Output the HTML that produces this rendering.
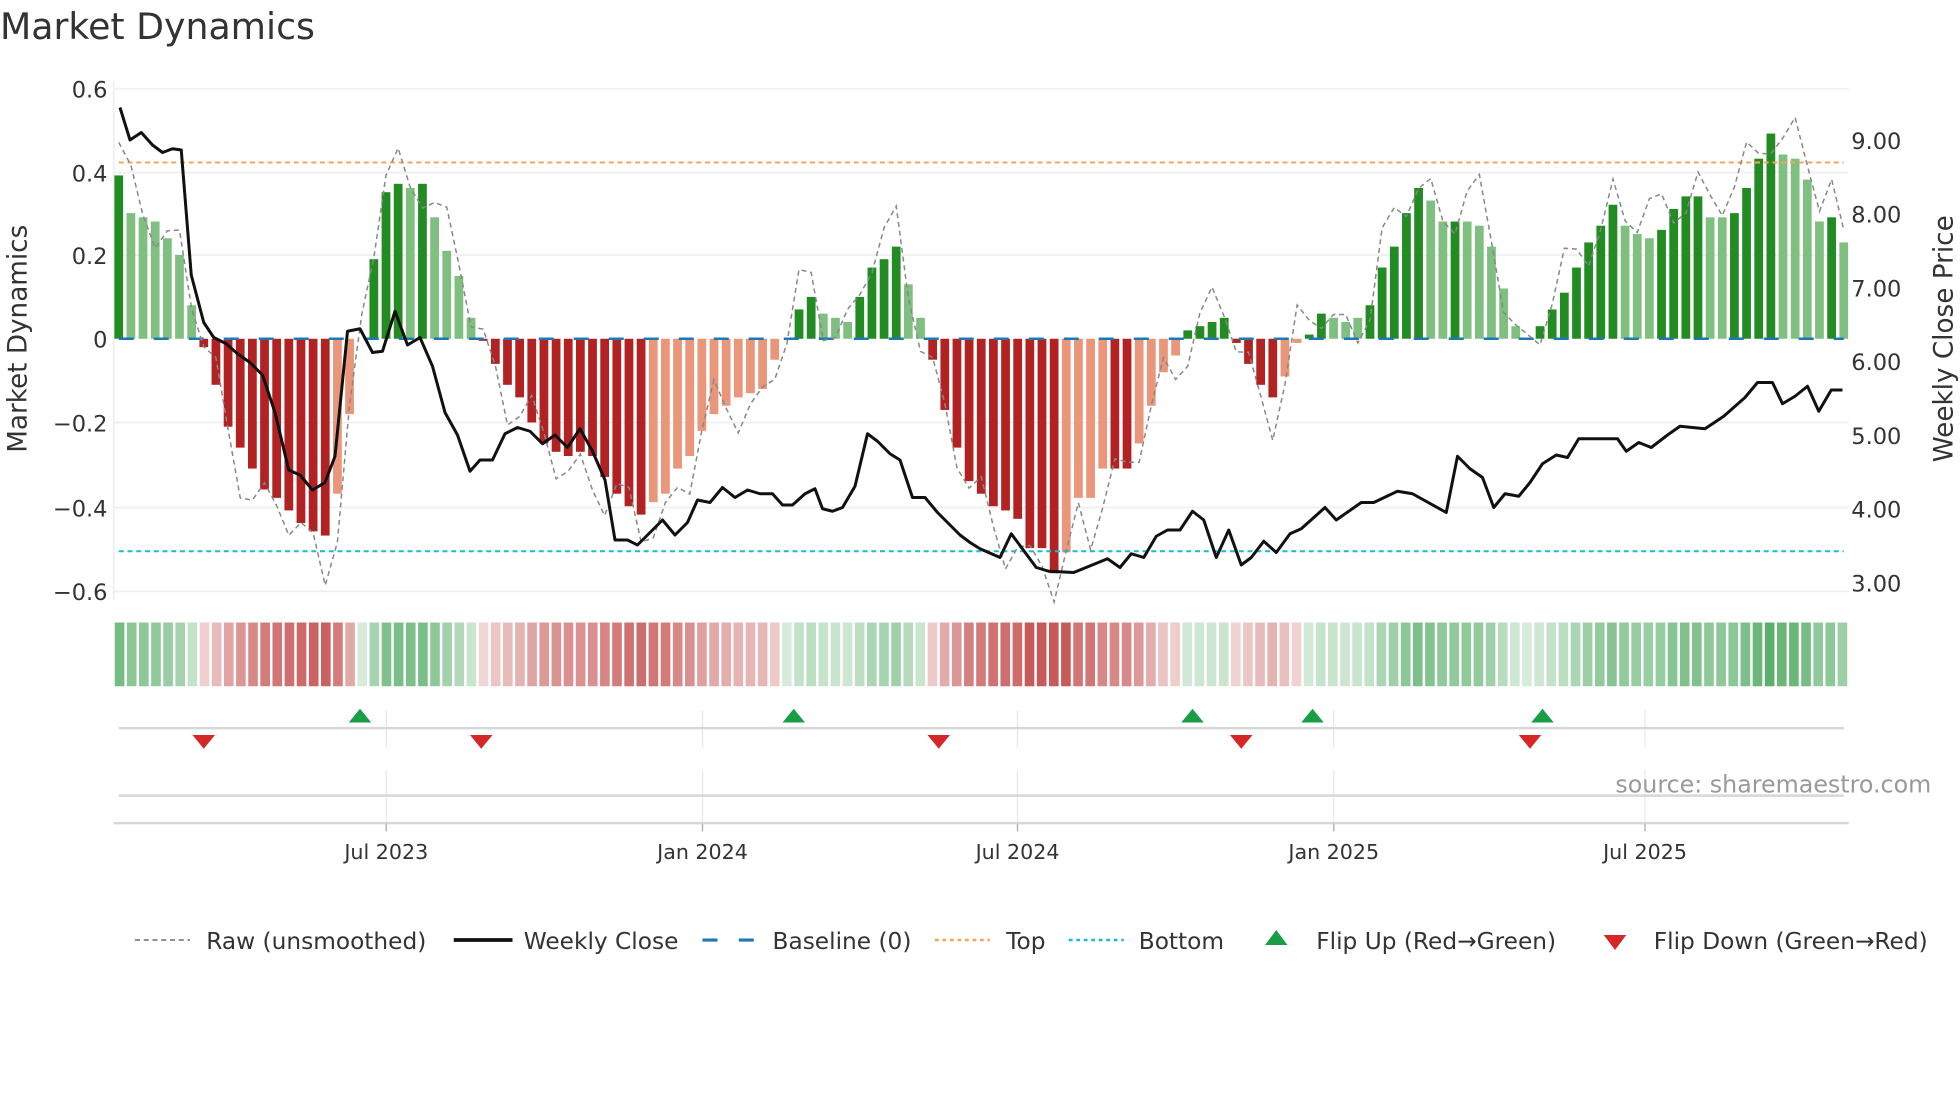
<!DOCTYPE html>
<html><head><meta charset="utf-8"><style>
html,body{margin:0;padding:0;background:#fff;width:1960px;height:1102px;overflow:hidden}
svg{display:block;font-family:"DejaVu Sans","Liberation Sans",sans-serif}
</style></head><body>
<svg id="s" width="1960" height="1102" viewBox="0 0 1568 881.6" xmlns="http://www.w3.org/2000/svg">
<text x="0" y="31" font-size="29" fill="#333">Market Dynamics</text>
<g id="grid" stroke="#eef0f3" stroke-width="1.5">
<line x1="91" x2="1479" y1="71" y2="71"/><line x1="91" x2="1479" y1="138" y2="138"/><line x1="91" x2="1479" y1="204" y2="204"/><line x1="91" x2="1479" y1="338" y2="338"/><line x1="91" x2="1479" y1="406" y2="406"/><line x1="91" x2="1479" y1="473" y2="473"/>
<line x1="91" x2="91" y1="65" y2="480"/>
</g>
<g font-size="18" fill="#333" text-anchor="end">
<text x="86" y="78">0.6</text><text x="86" y="145">0.4</text><text x="86" y="211">0.2</text><text x="86" y="278">0</text><text x="86" y="345">−0.2</text><text x="86" y="413">−0.4</text><text x="86" y="480">−0.6</text>
</g>
<g font-size="18" fill="#333">
<text x="1481" y="119">9.00</text><text x="1481" y="178">8.00</text><text x="1481" y="237">7.00</text><text x="1481" y="296">6.00</text><text x="1481" y="355">5.00</text><text x="1481" y="414">4.00</text><text x="1481" y="473">3.00</text>
</g>
<text transform="translate(21,271) rotate(-90)" font-size="21" fill="#333" text-anchor="middle">Market Dynamics</text>
<text transform="translate(1562,271) rotate(-90)" font-size="21" fill="#333" text-anchor="middle">Weekly Close Price</text>
<g id="bars"></g>
<line x1="95" x2="1475" y1="130" y2="130" stroke="#f4a460" stroke-width="1.6" stroke-dasharray="4,3"/>
<line x1="95" x2="1475" y1="441" y2="441" stroke="#17becf" stroke-width="1.6" stroke-dasharray="4,3"/>
<line x1="95" x2="1475" y1="271" y2="271" stroke="#1f77b4" stroke-width="2" stroke-dasharray="12,16"/>
<path id="raw" fill="none" stroke="#888" stroke-width="1.2" stroke-dasharray="4,3"/>
<path id="close" fill="none" stroke="#111" stroke-width="2.4" stroke-linejoin="round"/>
<g id="heat"></g>
<g stroke="#e6e8eb" stroke-width="1">
<line x1="309" x2="309" y1="568" y2="598"/><line x1="562" x2="562" y1="568" y2="598"/><line x1="814" x2="814" y1="568" y2="598"/><line x1="1067" x2="1067" y1="568" y2="598"/><line x1="1316" x2="1316" y1="568" y2="598"/>
<line x1="309" x2="309" y1="616" y2="658"/><line x1="562" x2="562" y1="616" y2="658"/><line x1="814" x2="814" y1="616" y2="658"/><line x1="1067" x2="1067" y1="616" y2="658"/><line x1="1316" x2="1316" y1="616" y2="658"/>
</g>
<line x1="95" x2="1475" y1="582.5" y2="582.5" stroke="#d5d7d9" stroke-width="2"/>
<line x1="95" x2="1475" y1="636.5" y2="636.5" stroke="#d5d7d9" stroke-width="2"/>
<line x1="91" x2="1479" y1="658.5" y2="658.5" stroke="#d5d7d9" stroke-width="2"/>
<g stroke="#aaa" stroke-width="1"><line x1="309" x2="309" y1="659" y2="665"/><line x1="562" x2="562" y1="659" y2="665"/><line x1="814" x2="814" y1="659" y2="665"/><line x1="1067" x2="1067" y1="659" y2="665"/><line x1="1316" x2="1316" y1="659" y2="665"/></g>
<g fill="#1a9e45">
<path d="M288 567l-9 11h18z"/><path d="M635 567l-9 11h18z"/><path d="M954 567l-9 11h18z"/><path d="M1050 567l-9 11h18z"/><path d="M1234 567l-9 11h18z"/>
</g>
<g fill="#d62728">
<path d="M163 599l-9 -11h18z"/><path d="M385 599l-9 -11h18z"/><path d="M751 599l-9 -11h18z"/><path d="M993 599l-9 -11h18z"/><path d="M1224 599l-9 -11h18z"/>
</g>
<g font-size="16.5" fill="#333" text-anchor="middle">
<text x="309" y="687">Jul 2023</text><text x="562" y="687">Jan 2024</text><text x="814" y="687">Jul 2024</text><text x="1067" y="687">Jan 2025</text><text x="1316" y="687">Jul 2025</text>
</g>
<text x="1545" y="634" font-size="19" fill="#999" text-anchor="end">source: sharemaestro.com</text>
<g font-size="18.6" fill="#333">
<line x1="108" x2="152" y1="752" y2="752" stroke="#888" stroke-width="1.5" stroke-dasharray="4,3"/><text x="165" y="759">Raw (unsmoothed)</text>
<line x1="363" x2="410" y1="752" y2="752" stroke="#111" stroke-width="3"/><text x="419" y="759">Weekly Close</text>
<line x1="562" x2="606" y1="752" y2="752" stroke="#1f77b4" stroke-width="2.5" stroke-dasharray="12,17"/><text x="618" y="759">Baseline (0)</text>
<line x1="748" x2="792" y1="752" y2="752" stroke="#f4a460" stroke-width="2" stroke-dasharray="3,3"/><text x="805" y="759">Top</text>
<line x1="855" x2="899" y1="752" y2="752" stroke="#17becf" stroke-width="2" stroke-dasharray="3,3"/><text x="911" y="759">Bottom</text>
<path d="M1021 744l-9 12h18z" fill="#1a9e45"/><text x="1053" y="759">Flip Up (Red→Green)</text>
<path d="M1292 760l-9 -12h18z" fill="#d62728"/><text x="1323" y="759">Flip Down (Green→Red)</text>
</g>
</svg>
<script>
var B=[[.39,1],[.30,0],[.29,0],[.28,0],[.24,0],[.20,0],[.08,0],[-.02,1],[-.11,1],[-.21,1],[-.26,1],[-.31,1],[-.36,1],[-.38,1],[-.41,1],[-.44,1],[-.46,1],[-.47,1],[-.37,0],[-.18,0],[0,0],[.19,1],[.35,1],[.37,1],[.36,0],[.37,1],[.29,0],[.21,0],[.15,0],[.05,0],
[-.005,1],[-.06,1],[-.11,1],[-.14,1],[-.20,1],[-.25,1],[-.27,1],[-.28,1],[-.27,1],[-.28,1],[-.33,1],[-.37,1],[-.40,1],[-.42,1],[-.39,0],[-.37,0],[-.31,0],[-.28,0],[-.22,0],[-.18,0],[-.16,0],[-.14,0],[-.13,0],[-.12,0],[-.05,0],[0,0],
[.07,1],[.10,1],[.06,0],[.05,0],[.04,0],[.10,1],[.17,1],[.19,1],[.22,1],[.13,0],[.05,0],
[-.05,1],[-.17,1],[-.26,1],[-.34,1],[-.37,1],[-.40,1],[-.41,1],[-.43,1],[-.50,1],[-.50,1],[-.56,1],[-.51,0],[-.38,0],[-.38,0],[-.31,0],[-.31,1],[-.31,1],[-.25,0],[-.16,0],[-.08,0],[-.04,0],
[.02,1],[.03,1],[.04,1],[.05,1],[-.01,1],[-.06,1],[-.11,1],[-.14,1],[-.09,0],[-.01,0],
[.01,1],[.06,1],[.05,0],[.04,0],[.05,0],[.08,1],[.17,1],[.22,1],[.30,1],[.36,1],[.33,0],[.28,0],[.28,1],[.28,0],[.27,0],[.22,0],[.12,0],[.03,0],[0,0],
[.03,1],[.07,1],[.11,1],[.17,1],[.23,1],[.27,1],[.32,1],[.27,0],[.25,0],[.24,0],[.26,1],[.31,1],[.34,1],[.34,1],[.29,0],[.29,0],[.30,1],[.36,1],[.43,1],[.49,1],[.44,0],[.43,0],[.38,0],[.28,0],[.29,1],[.23,0]];
var N=B.length,st=(1475-95)/(N-1),ns="http://www.w3.org/2000/svg";
function el(p,t,a){var e=document.createElementNS(ns,t);for(var k in a)e.setAttribute(k,a[k]);p.appendChild(e);return e}
var bg=document.getElementById('bars'),hg=document.getElementById('heat'),raw=[];
function Y(v){return 271-v*335}
for(var i=0;i<N;i++){var v=B[i][0],d=B[i][1],x=95+i*st;
 var c=v>=0?(d?'#228b22':'#7fbf7f'):(d?'#b22222':'#e9967a');
 if(v!=0)el(bg,'rect',{x:x-3.5,y:Math.min(Y(v),271),width:7,height:Math.abs(Y(v)-271),fill:c});
 var t=Math.min(1,Math.abs(v)/0.5);t=0.25+0.75*t;
 var hc=v>=0?'rgba(60,160,80,'+(t*0.85).toFixed(2)+')':'rgba(190,60,60,'+(t*0.85).toFixed(2)+')';
 el(hg,'rect',{x:91+i*(1388/N)+0.8,y:498,width:1388/N-2,height:51,fill:hc});
 var j=0.06*Math.sin(i*1.7)+0.04*Math.cos(i*0.9);raw.push([x,Y(v*1.1+j)]);
}
document.getElementById('raw').setAttribute('d','M'+raw.map(function(p){return p[0].toFixed(1)+' '+p[1].toFixed(1)}).join('L'));
var C=[[96,86],[104,112],[113,106],[122,116],[130,122],[138,119],[145,120],[153,220],[163,258],[171,270],[181,275],[190,283],[200,290],[210,300],[220,330],[231,376],[240,380],[250,392],[260,386],[268,365],[278,265],[288,263],[298,282],[306,281],[316,249],[326,276],[336,270],[346,293],[356,330],[366,348],[376,377],[384,368],[394,368],[404,347],[414,342],[424,345],[434,355],[444,348],[454,358],[464,343],[474,361],[484,384],[492,432],[502,432],[510,436],[518,428],[530,416],[540,428],[550,418],[558,400],[568,402],[578,390],[588,398],[598,392],[608,395],[618,395],[626,404],[634,404],[644,395],[652,391],[658,407],[666,409],[674,406],[684,389],[694,347],[702,353],[712,363],[720,368],[730,398],[740,398],[750,410],[760,420],[768,428],[776,434],[784,439],[800,446],[809,427],[829,454],[839,457],[859,458],[886,447],[896,454],[905,443],[915,446],[925,429],[934,424],[944,424],[954,409],[963,416],[973,446],[983,424],[993,452],[1001,446],[1011,433],[1021,442],[1032,427],[1041,423],[1060,406],[1069,416],[1089,402],[1099,402],[1118,393],[1130,395],[1157,410],[1166,365],[1176,375],[1186,382],[1195,406],[1204,395],[1215,397],[1224,386],[1234,371],[1245,364],[1254,366],[1263,351],[1294,351],[1301,361],[1311,354],[1321,358],[1334,348],[1344,341],[1364,343],[1379,333],[1396,318],[1406,306],[1418,306],[1426,323],[1436,317],[1446,309],[1455,329],[1465,312],[1474,312]];
document.getElementById('close').setAttribute('d','M'+C.map(function(p){return p.join(' ')}).join('L'));
</script>
</body></html>
